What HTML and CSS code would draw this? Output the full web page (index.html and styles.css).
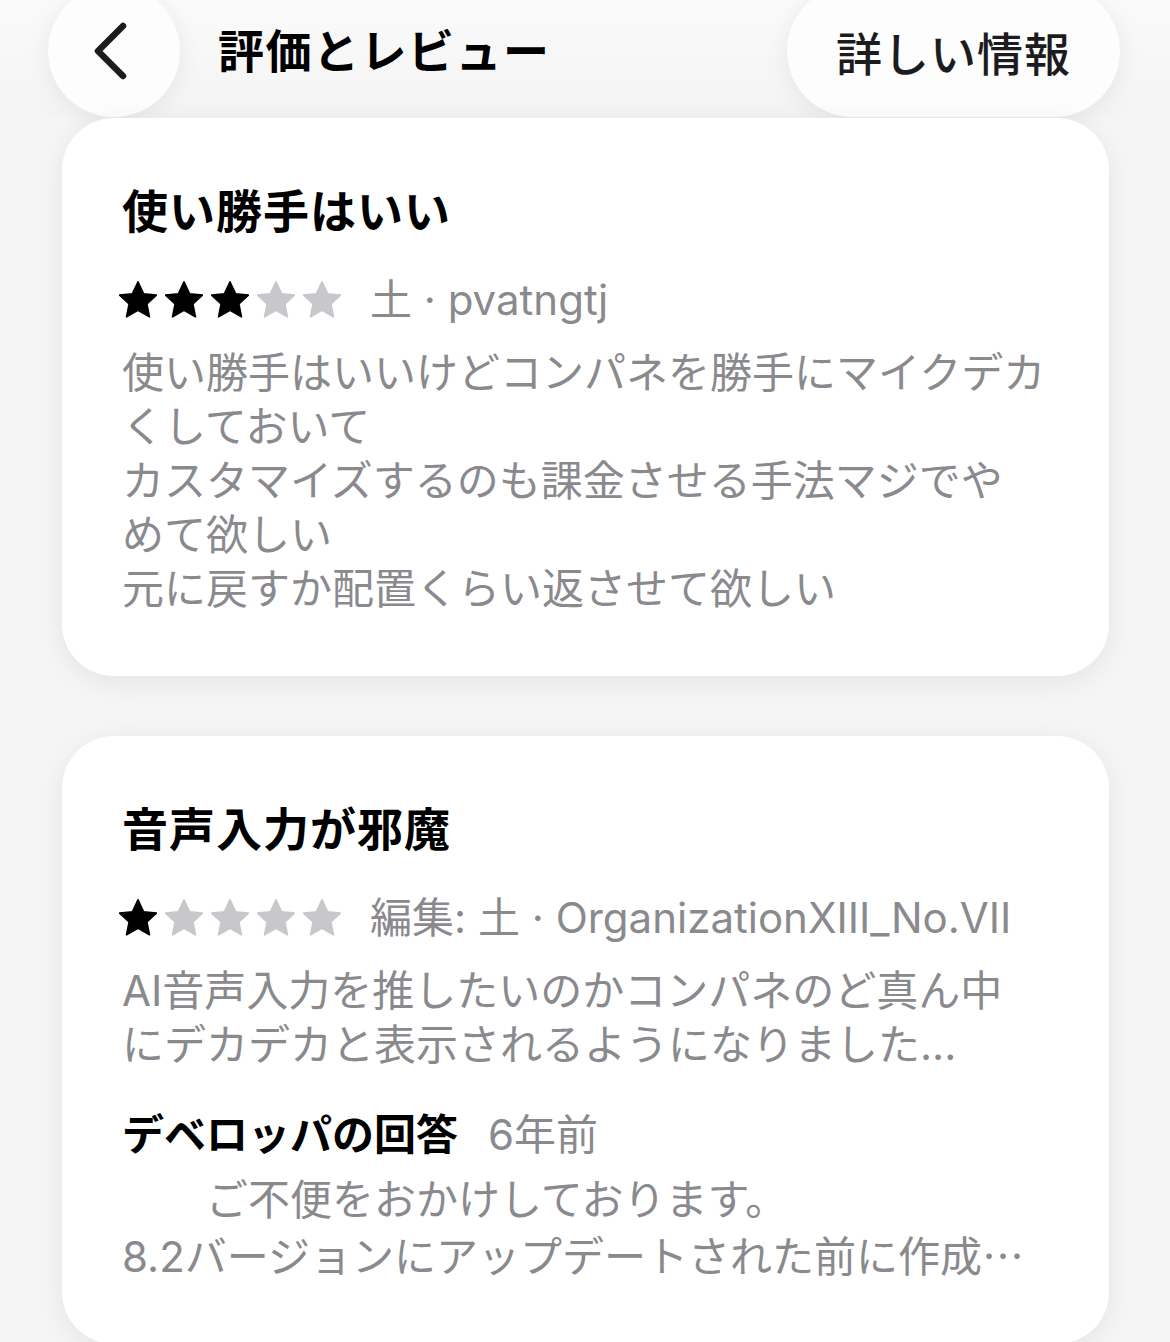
FILE: index.html
```html
<!DOCTYPE html>
<html lang="ja">
<head>
<meta charset="utf-8">
<title>評価とレビュー</title>
<link rel="stylesheet" href="styles.css">
</head>
<body>
<div class="page">
  <header class="topbar">
    <button class="back-btn" aria-label="戻る">
      <svg width="44" height="60" viewBox="0 0 44 60"><path d="M34 5 L9 30 L34 55" fill="none" stroke="#1c1c1e" stroke-width="6.5" stroke-linecap="round" stroke-linejoin="round"/></svg>
    </button>
    <h1 class="page-title">評価とレビュー</h1>
    <button class="info-btn">詳しい情報</button>
  </header>

  <main class="reviews">
    <article class="card">
      <h2 class="card-title">使い勝手はいい</h2>
      <div class="meta-row">
        <div class="stars">
          <svg class="star on" viewBox="2.4 2.2 19.2 19.2"><path d="M12 2.6l2.8 6 6.5.7-4.8 4.5 1.3 6.5L12 17l-5.8 3.3 1.3-6.5-4.8-4.5 6.5-.7z"/></svg>
          <svg class="star on" viewBox="2.4 2.2 19.2 19.2"><path d="M12 2.6l2.8 6 6.5.7-4.8 4.5 1.3 6.5L12 17l-5.8 3.3 1.3-6.5-4.8-4.5 6.5-.7z"/></svg>
          <svg class="star on" viewBox="2.4 2.2 19.2 19.2"><path d="M12 2.6l2.8 6 6.5.7-4.8 4.5 1.3 6.5L12 17l-5.8 3.3 1.3-6.5-4.8-4.5 6.5-.7z"/></svg>
          <svg class="star off" viewBox="2.4 2.2 19.2 19.2"><path d="M12 2.6l2.8 6 6.5.7-4.8 4.5 1.3 6.5L12 17l-5.8 3.3 1.3-6.5-4.8-4.5 6.5-.7z"/></svg>
          <svg class="star off" viewBox="2.4 2.2 19.2 19.2"><path d="M12 2.6l2.8 6 6.5.7-4.8 4.5 1.3 6.5L12 17l-5.8 3.3 1.3-6.5-4.8-4.5 6.5-.7z"/></svg>
        </div>
        <span class="meta">土 · pvatngtj</span>
      </div>
      <p class="body">使い勝手はいいけどコンパネを勝手にマイクデカ<br>くしておいて<br>カスタマイズするのも課金させる手法マジでや<br>めて欲しい<br>元に戻すか配置くらい返させて欲しい</p>
    </article>

    <article class="card">
      <h2 class="card-title">音声入力が邪魔</h2>
      <div class="meta-row">
        <div class="stars">
          <svg class="star on" viewBox="2.4 2.2 19.2 19.2"><path d="M12 2.6l2.8 6 6.5.7-4.8 4.5 1.3 6.5L12 17l-5.8 3.3 1.3-6.5-4.8-4.5 6.5-.7z"/></svg>
          <svg class="star off" viewBox="2.4 2.2 19.2 19.2"><path d="M12 2.6l2.8 6 6.5.7-4.8 4.5 1.3 6.5L12 17l-5.8 3.3 1.3-6.5-4.8-4.5 6.5-.7z"/></svg>
          <svg class="star off" viewBox="2.4 2.2 19.2 19.2"><path d="M12 2.6l2.8 6 6.5.7-4.8 4.5 1.3 6.5L12 17l-5.8 3.3 1.3-6.5-4.8-4.5 6.5-.7z"/></svg>
          <svg class="star off" viewBox="2.4 2.2 19.2 19.2"><path d="M12 2.6l2.8 6 6.5.7-4.8 4.5 1.3 6.5L12 17l-5.8 3.3 1.3-6.5-4.8-4.5 6.5-.7z"/></svg>
          <svg class="star off" viewBox="2.4 2.2 19.2 19.2"><path d="M12 2.6l2.8 6 6.5.7-4.8 4.5 1.3 6.5L12 17l-5.8 3.3 1.3-6.5-4.8-4.5 6.5-.7z"/></svg>
        </div>
        <span class="meta">編集: 土 · OrganizationXIII_No.VII</span>
      </div>
      <p class="body">AI音声入力を推したいのかコンパネのど真ん中<br>にデカデカと表示されるようになりました...</p>
      <div class="dev-head">
        <span class="dev-label">デベロッパの回答</span>
        <span class="dev-date">6年前</span>
      </div>
      <p class="body dev-body">　　ご不便をおかけしております。<br>8.2バージョンにアップデートされた前に作成<span class="cjk-ellipsis">…</span></p>
    </article>
  </main>
</div>
</body>
</html>
```

FILE: styles.css
```css
html, body {
  margin: 0;
  padding: 0;
}

body {
  background: #f5f5f5;
  font-family: Inter, "Noto Sans CJK JP", sans-serif;
  color: #000;
  overflow: hidden;
}

.page {
  width: 1170px;
}

.topbar {
  display: flex;
  align-items: center;
  height: 132px;
  margin-top: -15px;
  padding: 0 50px 0 48px;
  background: linear-gradient(#fbfbfb, #f4f4f4);
}

.back-btn {
  width: 132px;
  height: 132px;
  border: none;
  border-radius: 50%;
  background: #fdfdfd;
  box-shadow: 0 4px 26px rgba(0, 0, 0, 0.07);
  display: flex;
  align-items: center;
  justify-content: center;
  padding: 0 6px 0 0;
  margin: 0;
}

.page-title {
  margin: 0 0 0 38px;
  font-size: 46px;
  font-weight: 700;
  line-height: 56px;
  letter-spacing: 1.5px;
  flex: 1;
  color: #000;
}

.info-btn {
  height: 132px;
  width: 333px;
  border: none;
  border-radius: 66px;
  background: #fdfdfd;
  box-shadow: 0 4px 26px rgba(0, 0, 0, 0.07);
  font-family: Inter, "Noto Sans CJK JP", sans-serif;
  font-size: 46px;
  font-weight: 500;
  color: #1c1c1e;
  padding: 0;
  margin: 0;
  letter-spacing: 1px;
}

.reviews {
  display: flex;
  flex-direction: column;
  gap: 60px;
  padding: 1px 61px 0 62px;
}

.card {
  background: #fff;
  border-radius: 52px;
  box-shadow: 0 6px 28px rgba(0, 0, 0, 0.07);
  padding: 65px 60px 60px;
}

.card-title {
  margin: 0;
  font-size: 46px;
  font-weight: 700;
  line-height: 56px;
  letter-spacing: 1px;
  color: #000;
}

.meta-row {
  display: flex;
  align-items: center;
  height: 54px;
  margin-top: 34px;
}

.stars {
  display: flex;
  gap: 8px;
  margin-right: 29px;
  margin-left: -3px;
}

.star {
  width: 38px;
  height: 38px;
}

.star path {
  stroke-width: 0.8;
  stroke-linejoin: round;
}

.star.on path {
  fill: #000;
  stroke: #000;
}

.star.off path {
  fill: #c7c7cc;
  stroke: #c7c7cc;
}

.meta {
  font-size: 42px;
  line-height: 54px;
  color: #8a8a8e;
  white-space: nowrap;
}

.body {
  margin: 19px 0 0;
  font-size: 42px;
  line-height: 54px;
  color: #8a8a8e;
  white-space: nowrap;
}

.cjk-ellipsis {
  font-family: "Noto Sans CJK JP", sans-serif;
}

.dev-head {
  display: flex;
  align-items: baseline;
  margin-top: 36px;
  height: 54px;
  line-height: 54px;
}

.dev-label {
  font-size: 42px;
  font-weight: 700;
  color: #000;
}

.dev-date {
  font-size: 42px;
  color: #8a8a8e;
  margin-left: 30px;
}

.dev-body {
  margin-top: 11px;
}
```
